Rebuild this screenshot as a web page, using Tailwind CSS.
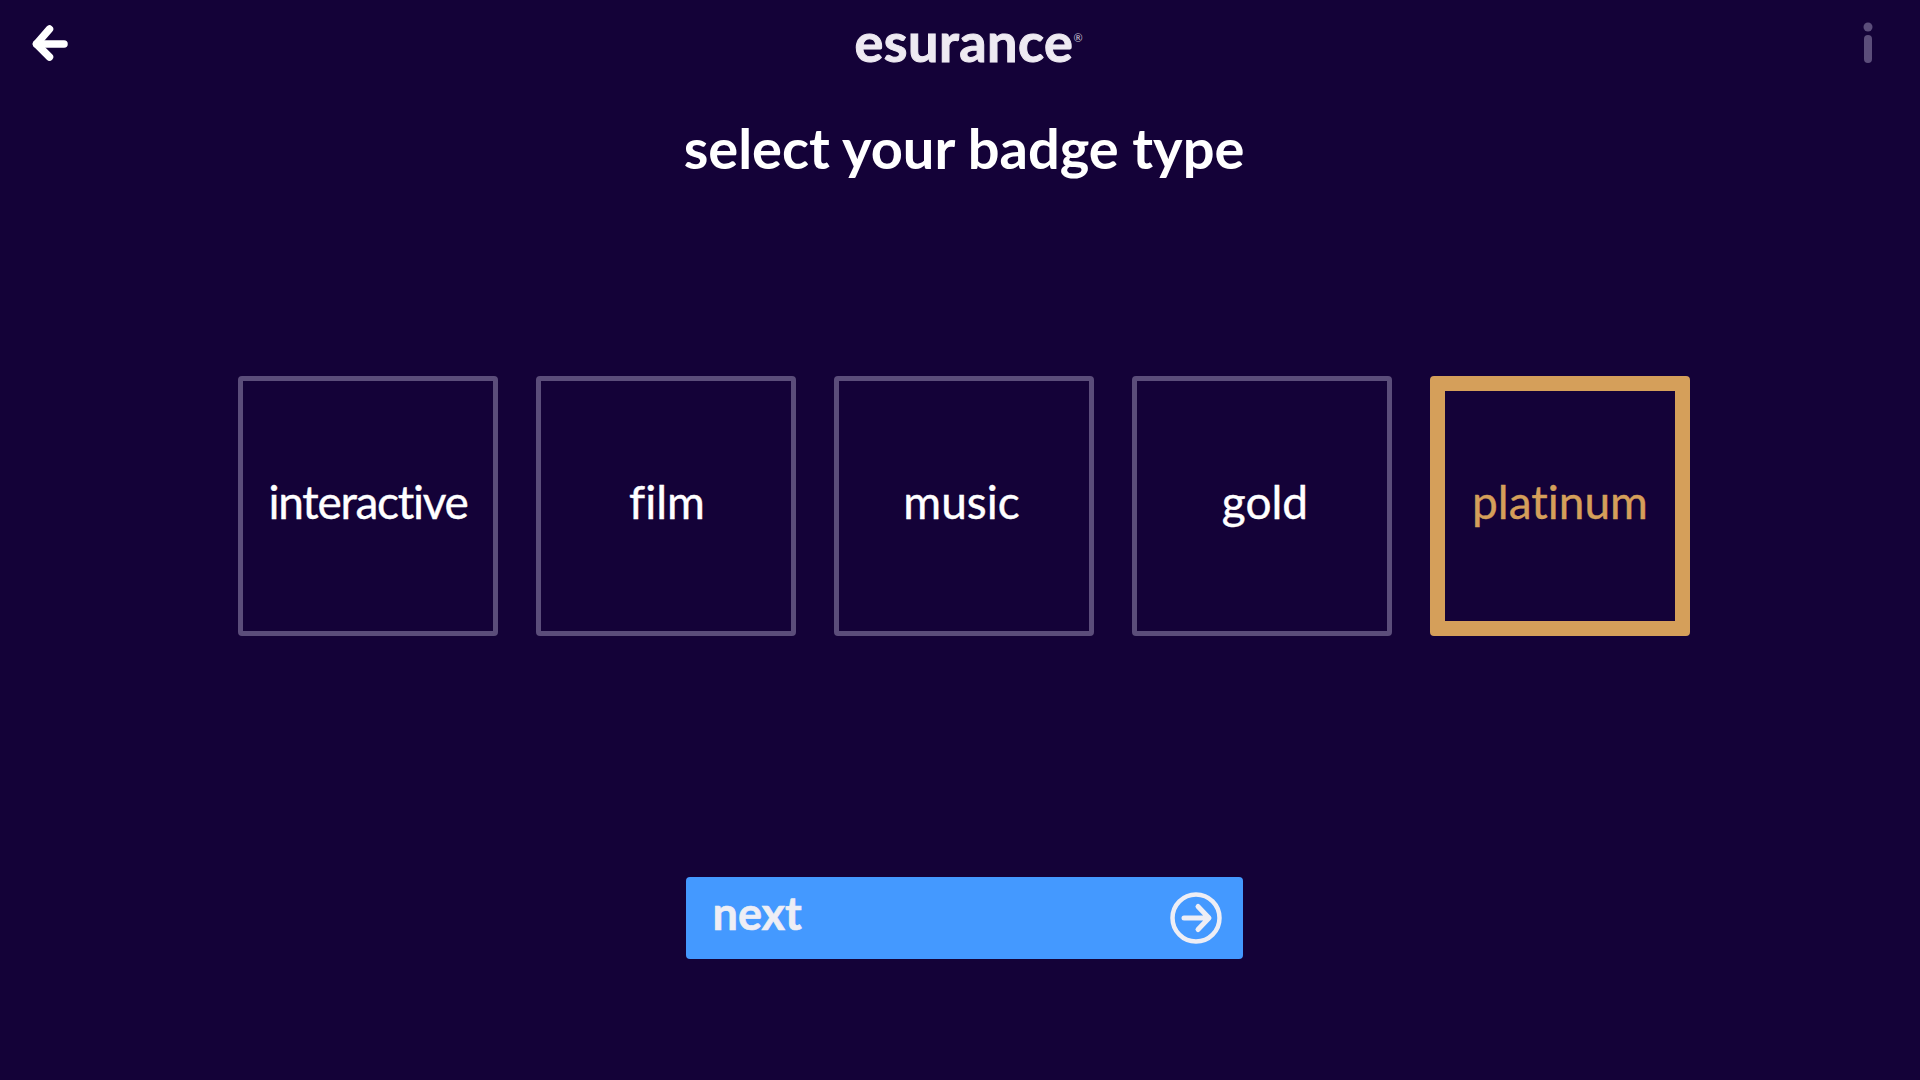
<!DOCTYPE html>
<html lang="en">
<head>
    <meta charset="UTF-8">
    <meta name="viewport" content="width=device-width, initial-scale=1.0">
    <title>Select badge type - esurance</title>
    <script src="https://cdn.jsdelivr.net/npm/@tailwindcss/browser@4"></script>
</head>
<body class="bg-[#140238] min-h-screen overflow-hidden font-['Lato',sans-serif] text-white [font-variant-ligatures:none]">
    <!-- top bar -->
    <header class="h-[88px] flex items-center justify-between pl-[32px] pr-[47px]">
        <button class="w-[40px] h-[40px] shrink-0">
            <svg width="40" height="40" viewBox="0 0 40 40" fill="none" stroke="#ffffff" stroke-width="7.5" stroke-linecap="round" stroke-linejoin="round">
                <path d="M17.5 5 L4.5 20 L17.5 33"/>
                <path d="M4.5 20 H32"/>
            </svg>
        </button>
        <div class="flex items-start ml-[2px] pb-[5px]">
            <span class="text-[54px] leading-none font-bold text-[#eeeaf2] tracking-[0.5px] [-webkit-text-stroke:1px_#eeeaf2]">esurance</span>
            <span class="text-[11px] leading-none text-[#c9c4d4] mt-[17px]">®</span>
        </div>
        <svg class="shrink-0 mb-[3px]" width="10" height="41" viewBox="0 0 10 41" fill="#5b4d7a">
            <circle cx="5" cy="5" r="4.5"/>
            <rect x="1" y="13" width="8" height="28" rx="4"/>
        </svg>
    </header>

    <main class="flex flex-col items-center pl-[8px]">
        <h1 class="text-[56px] leading-[60px] font-bold mt-[30px]">select your badge type</h1>

        <!-- badge options -->
        <div class="flex gap-[38px] mt-[198px]">
            <button class="w-[260px] h-[260px] rounded-[4px] border-[5px] border-[#5b4d7a] flex items-center justify-center pb-[9px] text-[46px] tracking-[-1.3px] [-webkit-text-stroke:0.4px_#ffffff]">interactive</button>
            <button class="w-[260px] h-[260px] rounded-[4px] border-[5px] border-[#5b4d7a] flex items-center justify-center pb-[9px] pl-[2px] text-[46px] [-webkit-text-stroke:0.4px_#ffffff]">film</button>
            <button class="w-[260px] h-[260px] rounded-[4px] border-[5px] border-[#5b4d7a] flex items-center justify-center pb-[9px] pr-[5px] text-[46px] [-webkit-text-stroke:0.4px_#ffffff]">music</button>
            <button class="w-[260px] h-[260px] rounded-[4px] border-[5px] border-[#5b4d7a] flex items-center justify-center pb-[9px] pl-[6px] text-[46px] [-webkit-text-stroke:0.4px_#ffffff]">gold</button>
            <button class="w-[260px] h-[260px] rounded-[4px] border-[15px] border-[#d59f5a] flex items-center justify-center pb-[9px] text-[46px] text-[#d59f5a] [-webkit-text-stroke:0.4px_#d59f5a]">platinum</button>
        </div>

        <button class="w-[557px] h-[82px] mt-[241px] rounded-[4px] bg-[#4499ff] flex items-center justify-between pl-[27px] pr-[21px] text-[#eeeef5]">
            <span class="text-[45px] font-bold leading-none pb-[10px] [-webkit-text-stroke:0.6px_#eeeef5]">next</span>
            <svg width="52" height="52" viewBox="0 0 52 52" fill="none" stroke="#eeeef5" stroke-linecap="round" stroke-linejoin="round">
                <circle cx="26" cy="26" r="23.5" stroke-width="4.5"/>
                <path d="M14 26 H38 M28 14.5 L39 26 L28 37.5" stroke-width="5"/>
            </svg>
        </button>
    </main>
</body>
</html>
